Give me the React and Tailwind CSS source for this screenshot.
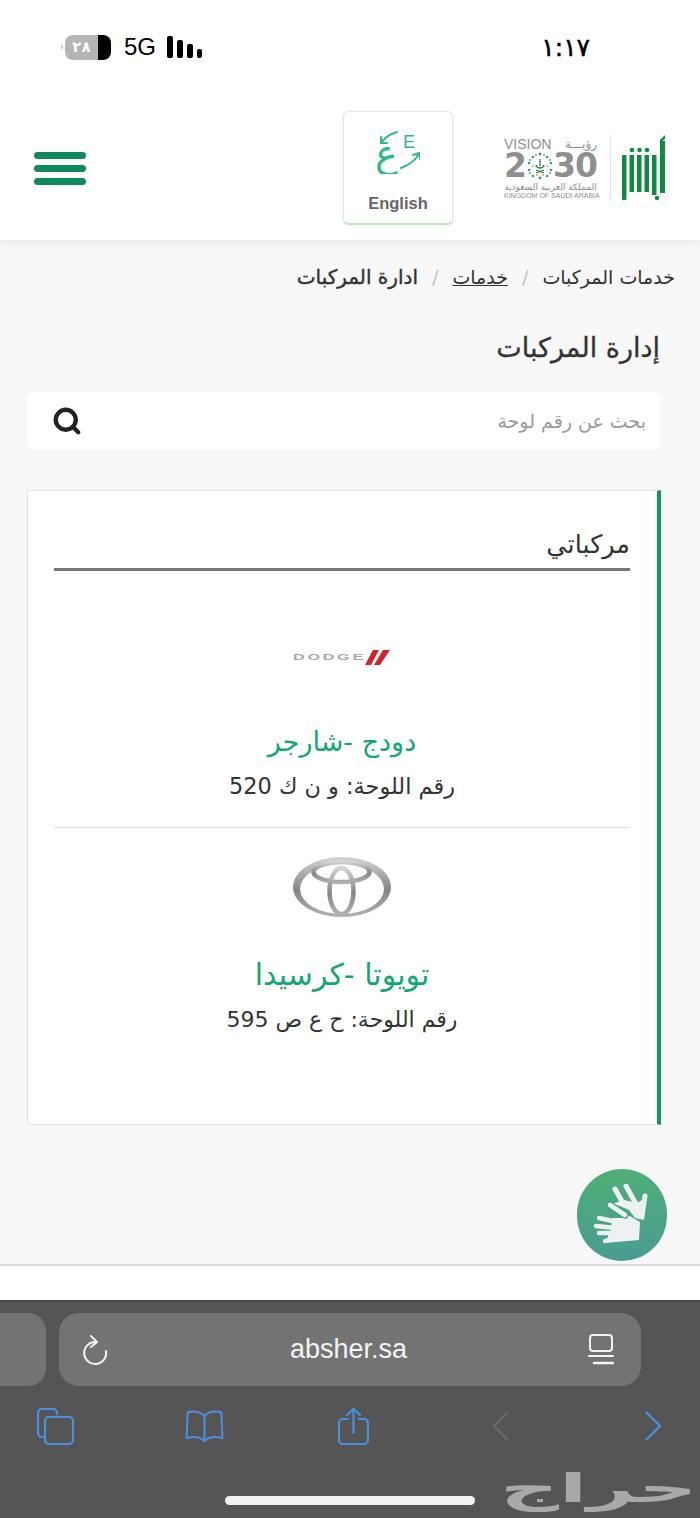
import React from 'react';
import { Search } from 'lucide-react';

const arabic = "font-['DejaVu_Sans',sans-serif]";

const StatusBar = () => (
  <div dir="ltr" className="flex items-center justify-between h-[98px] pl-[61px] pr-[110px] pb-[4px]">
    <div className="flex items-center">
      <div className="w-[2px] h-[6px] bg-gray-300 rounded-l mr-[2px]" />
      <div className="flex w-[46px] h-[25px] rounded-[8px] overflow-hidden bg-[#b5b5b5]">
        <div className="flex-1 text-center text-white text-[15px] leading-[25px] font-bold font-['DejaVu_Sans',sans-serif]">٢٨</div>
        <div className="w-[13px] bg-black" />
      </div>
      <span className="ml-[13px] text-[24px] leading-none text-black font-['Liberation_Sans',sans-serif]">5G</span>
      <div className="ml-[11px] flex items-end gap-[4px]">
        <div className="w-[6px] h-[22px] bg-black rounded-[2px]" />
        <div className="w-[6px] h-[18px] bg-black rounded-[2px]" />
        <div className="w-[6px] h-[14px] bg-black rounded-[2px]" />
        <div className="w-[5px] h-[9px] bg-black rounded-[2px]" />
      </div>
    </div>
    <span className="text-[25px] leading-none text-black [-webkit-text-stroke:0.5px_#000] font-['DejaVu_Sans',sans-serif]">١:١٧</span>
  </div>
);

const AbsherLogo = () => (
  <svg width="44" height="66" viewBox="0 0 44 66" fill="#128a45">
    <rect x="0" y="20" width="4.5" height="45" rx="1" />
    <rect x="7.5" y="20" width="4.5" height="37" />
    <rect x="15" y="20" width="4.5" height="37" />
    <rect x="22.5" y="20" width="4.5" height="37" />
    <rect x="30" y="20" width="4.5" height="40" />
    <rect x="38" y="6" width="5" height="52" />
    <circle cx="10" cy="15" r="2.3" />
    <circle cx="17.5" cy="15" r="2.3" />
    <circle cx="25" cy="15" r="2.3" />
    <circle cx="35" cy="63" r="2.3" />
    <path d="M38 5 L43 0 V4 L38 8 Z" />
  </svg>
);

const VisionLogo = () => (
  <div dir="ltr" className="w-[93px] text-[#8f8f8f] font-['Liberation_Sans',sans-serif]">
    <div className="flex items-center justify-between h-[14px] overflow-hidden">
      <span className="text-[14px] leading-[14px]">VISION</span>
      <span className="text-[12px] leading-[14px] font-['DejaVu_Sans',sans-serif]">رؤيـــة</span>
    </div>
    <div className="flex items-center justify-between h-[30px] text-[33px] leading-[30px] font-bold tracking-[-1px] font-['DejaVu_Sans',sans-serif]">
      <span>2</span>
      <svg width="26" height="28" viewBox="0 0 26 28" className="shrink-0">
        <g fill="#3f9a7a">
          <circle cx="13" cy="2" r="1.4" /><circle cx="6" cy="5" r="1.3" /><circle cx="20" cy="5" r="1.3" />
          <circle cx="2" cy="11" r="1.3" /><circle cx="24" cy="11" r="1.3" /><circle cx="2" cy="18" r="1.3" />
          <circle cx="24" cy="18" r="1.3" /><circle cx="6" cy="24" r="1.3" /><circle cx="20" cy="24" r="1.3" />
          <circle cx="13" cy="26" r="1.4" />
        </g>
        <g fill="#5aa6c8">
          <circle cx="9" cy="3" r="1" /><circle cx="17" cy="3" r="1" /><circle cx="3" cy="8" r="1" />
          <circle cx="23" cy="8" r="1" /><circle cx="3" cy="21" r="1" /><circle cx="23" cy="21" r="1" />
        </g>
        <g fill="#c9b458">
          <circle cx="6" cy="14" r="1" /><circle cx="20" cy="14" r="1" /><circle cx="10" cy="23" r="1" /><circle cx="16" cy="23" r="1" />
        </g>
        <path d="M13 7 V14 M9 13 C10 17 16 17 17 13 M9 18 L17 21 M17 18 L9 21" stroke="#2e7d4f" strokeWidth="1.3" fill="none" />
      </svg>
      <span>30</span>
    </div>
    <div dir="rtl" className="mt-px text-[9px] leading-[10px] text-center whitespace-nowrap font-['DejaVu_Sans',sans-serif]">المملكة العربية السعودية</div>
    <div className="text-[7px] leading-[8px] whitespace-nowrap">KINGDOM OF SAUDI ARABIA</div>
  </div>
);

const LangIcon = () => (
  <svg dir="ltr" width="44" height="43" viewBox="0 0 44 43" fill="none" stroke="#2fb98a" strokeWidth="2" strokeLinecap="round" strokeLinejoin="round">
    <path d="M21 1 C14 3 9 6 5 12" />
    <path d="M5 6 L5 12 L11 12" />
    <path d="M25 37 C33 34 40 30 43 22" />
    <path d="M37 24 L43 22 L44 28" />
    <text x="27" y="17" direction="ltr" fill="#2fb98a" stroke="none" fontSize="18" fontFamily="Liberation Sans, sans-serif">E</text>
    <text x="-1" y="36" direction="ltr" fill="#2fb98a" stroke="none" fontSize="38" fontFamily="DejaVu Sans, sans-serif">ع</text>
  </svg>
);

const DodgeLogo = () => (
  <div dir="ltr" className="flex items-center h-[16px] w-[98px]">
    <span className="text-[9px] leading-none font-bold tracking-[1.5px] text-[#a8a8a8] font-['Liberation_Sans',sans-serif] [transform:scaleX(1.8)] origin-left">DODGE</span>
    <svg width="26" height="15" viewBox="0 0 26 15" className="ml-auto" fill="#d2232a">
      <path d="M8 0 H14 L6 15 H0 Z" />
      <path d="M18 0 H25 L15 15 H9 Z" />
    </svg>
  </div>
);

const ToyotaLogo = () => (
  <svg width="98" height="60" viewBox="0 0 98 60" fill="none">
    <defs>
      <linearGradient id="chrome" x1="0" y1="0" x2="0" y2="1">
        <stop offset="0" stopColor="#d4d4d4" />
        <stop offset="0.55" stopColor="#858585" />
        <stop offset="1" stopColor="#b0b0b0" />
      </linearGradient>
    </defs>
    <path
      fillRule="evenodd"
      fill="url(#chrome)"
      d="M0 30 A49 30 0 1 0 98 30 A49 30 0 1 0 0 30 Z M7 32 A42 25 0 1 1 91 32 A42 25 0 1 1 7 32 Z"
    />
    <ellipse cx="48.5" cy="15" rx="28" ry="10" stroke="url(#chrome)" strokeWidth="4.5" />
    <ellipse cx="48.5" cy="34" rx="12" ry="23" stroke="url(#chrome)" strokeWidth="4.5" />
  </svg>
);

const HandsIcon = () => (
  <svg width="62" height="62" viewBox="0 0 62 62" fill="#eef1f3">
    <g stroke="#eef1f3" strokeWidth="5" strokeLinecap="round">
      <path d="M24 5 L33 21" />
      <path d="M35 2 L45 20" />
      <path d="M54 12 L51 32" />
    </g>
    <path d="M21 20 L33 16 L46 19 L51 16 L55 13 L53 36 L44 34 L38 26 L29 22 Z" />
    <g stroke="#eef1f3" strokeWidth="4.4" strokeLinecap="round">
      <path d="M8 34 L26 38" />
      <path d="M5 42 L24 44" />
      <path d="M8 49 L24 49" />
      <path d="M14 57 L24 54" />
    </g>
    <path d="M21 34 L33 34 L37 31 L49 38 L48 56 L14 59 L20 46 Z" />
    <path d="M19 21 L34 31" stroke="#4aa583" strokeWidth="7.5" strokeLinecap="round" />
    <path d="M19 21 L34 31" stroke="#eef1f3" strokeWidth="4.6" strokeLinecap="round" />
  </svg>
);

const Vehicle = ({ name, plate, logo, logoClass, nameClass, plateClass }) => (
  <div className="flex flex-col items-center">
    <div className={logoClass}>{logo}</div>
    <div className={`leading-[34px] text-[#13a772] ${arabic} ${nameClass}`}>{name}</div>
    <div className={`leading-[30px] text-[#333] ${arabic} ${plateClass}`}>{plate}</div>
  </div>
);

const Toolbar = () => (
  <div dir="ltr" className="relative h-[218px] bg-[#555555] border-t-[2px] border-[#454545]">
    <div className="flex gap-[13px] pt-[11px]">
      <div className="w-[46px] h-[73px] bg-[#737373] rounded-r-[18px]" />
      <div className="flex items-center justify-between w-[582px] h-[73px] pl-[22px] pr-[27px] bg-[#737373] rounded-[20px]">
        <svg width="28" height="32" viewBox="0 0 28 32" fill="none" stroke="#f4f4f4" strokeWidth="2" strokeLinecap="round" strokeLinejoin="round">
          <path d="M15 8 A11 11 0 1 0 25 17" />
          <path d="M10 2 L16 8 L10 13" />
        </svg>
        <span className="text-[27px] leading-none text-[#f4f4f4] font-['Liberation_Sans',sans-serif]">absher.sa</span>
        <svg width="26" height="34" viewBox="0 0 26 34" fill="none" stroke="#f4f4f4" strokeWidth="2" strokeLinecap="round">
          <rect x="2" y="2" width="22" height="16" rx="3" />
          <path d="M1 23 H25" />
          <path d="M6 30 H25" strokeWidth="2.4" />
        </svg>
      </div>
    </div>
    <div className="flex items-center pl-[37px] mt-[14px] h-[52px]">
      <svg width="37" height="37" viewBox="0 0 37 37" fill="none" stroke="#4a8fe0" strokeWidth="2.2">
        <path d="M7 29 H5 A4 4 0 0 1 1 25 V5 A4 4 0 0 1 5 1 H16 A4 4 0 0 1 20 5 V7" />
        <rect x="8" y="9" width="28" height="27" rx="4" />
      </svg>
      <svg width="39" height="32" viewBox="0 0 40 34" fill="none" stroke="#4a8fe0" strokeWidth="2.2" strokeLinejoin="round" className="ml-[111px]">
        <path d="M20 7 C17 2 11 1 4 2 C3 2 2 3 2 4 L1 30 C8 28 15 28 20 33 C25 28 32 28 39 30 L38 4 C38 3 37 2 36 2 C29 1 23 2 20 7 Z" />
        <path d="M20 7 V32" />
      </svg>
      <svg width="31" height="38" viewBox="0 0 31 38" fill="none" stroke="#4a8fe0" strokeWidth="2.2" strokeLinecap="round" className="ml-[114px]">
        <path d="M10 12 H5 A4 4 0 0 0 1 16 V33 A4 4 0 0 0 5 37 H26 A4 4 0 0 0 30 33 V16 A4 4 0 0 0 26 12 H21" />
        <path d="M15.5 26 V2" />
        <path d="M9 8 L15.5 2 L22 8" />
      </svg>
      <svg width="19" height="30" viewBox="0 0 19 30" fill="none" stroke="#6a6a6a" strokeWidth="2.4" className="ml-[122px]">
        <path d="M17 1 L3 15 L17 29" />
      </svg>
      <svg width="19" height="30" viewBox="0 0 19 30" fill="none" stroke="#4a8fe0" strokeWidth="2.4" className="ml-[134px]">
        <path d="M2 1 L16 15 L2 29" />
      </svg>
    </div>
    <div className="pl-[225px] mt-[44px]">
      <div className="w-[250px] h-[9px] bg-[#f2f2f2] rounded-full" />
    </div>
    <div dir="rtl" className="absolute left-[500px] top-[164px] text-[#a9a9a9] text-[40px] leading-[44px] font-bold font-['DejaVu_Sans',sans-serif] [transform:scaleX(2.05)] origin-left">حراج</div>
  </div>
);

export default function App() {
  return (
    <div dir="rtl" className="relative w-[700px] h-[1518px] overflow-hidden bg-[#f8f8f8]">
      <div className="bg-white h-[240px] shadow-[0_2px_12px_rgba(0,0,0,0.08)]">
        <StatusBar />
        <div className="flex items-center h-[142px] pr-[34px] pl-[34px] pb-[2px]">
          <AbsherLogo />
          <div className="w-px h-[66px] bg-[#e2e2e2] mr-[11px] ml-[13px]" />
          <VisionLogo />
          <div className="mr-[51px] w-[110px] h-[114px] rounded-[6px] bg-white border border-[#e4e4e4] border-b-2 border-b-[#bfe8bf] shadow-[0_1px_4px_rgba(0,0,0,0.08)] flex flex-col items-center pt-[19px]">
            <LangIcon />
            <span className="mt-[19px] text-[16.5px] leading-[20px] font-bold text-[#666] font-['Liberation_Sans',sans-serif]">English</span>
          </div>
          <div className="mr-auto w-[52px] flex flex-col gap-[6px]">
            <div className="h-[7px] rounded-full bg-[#0e8a5b]" />
            <div className="h-[7px] rounded-full bg-[#0e8a5b]" />
            <div className="h-[7px] rounded-full bg-[#0e8a5b]" />
          </div>
        </div>
      </div>

      <div className={`px-[25px] pt-[24px] flex items-center text-[19px] leading-[26px] text-[#333] ${arabic}`}>
        <span>خدمات المركبات</span>
        <span className="mx-[14px] text-[#c4c4c4]">/</span>
        <span className="underline">خدمات</span>
        <span className="mx-[14px] text-[#c4c4c4]">/</span>
        <span className="text-[20px] [-webkit-text-stroke:0.4px_#333]">ادارة المركبات</span>
      </div>

      <div className={`mt-[39px] px-[40px] text-[27px] leading-[38px] text-[#333] [-webkit-text-stroke:0.3px_#333] ${arabic}`}>إدارة المركبات</div>

      <div className="mr-[40px] mt-[25px] h-[58px] w-[633px] bg-white rounded-[8px] flex items-center justify-between pr-[14px] pl-[25px]">
        <span className={`text-[19px] text-[#9a9a9a] ${arabic}`}>بحث عن رقم لوحة</span>
        <Search size={30} strokeWidth={3.5} className="text-[#222]" />
      </div>

      <div className="mr-[39px] mt-[40px] w-[634px] h-[635px] bg-white border border-[#e3e3e3] border-r-[4px] border-r-[#0e9a5e] pr-[27px] pl-[26px] pt-[35px]">
        <div className={`h-[45px] border-b-[3px] border-[#777] text-[25.5px] leading-[36px] text-[#333] ${arabic}`}>مركباتي</div>
        <Vehicle
          name="دودج -شارجر"
          plate="رقم اللوحة: و ن ك 520"
          logo={<DodgeLogo />}
          logoClass="mt-[78px] h-[16px]"
          nameClass="mt-[60px] text-[27px]"
          plateClass="mt-[12px] text-[22.4px]"
        />
        <div className="mt-[26px] h-px bg-[#dedede]" />
        <Vehicle
          name="تويوتا -كرسيدا"
          plate="رقم اللوحة: ح ع ص 595"
          logo={<ToyotaLogo />}
          logoClass="mt-[29px] h-[60px]"
          nameClass="mt-[41px] text-[30px]"
          plateClass="mt-[13px] text-[22px]"
        />
      </div>

      <div className="absolute left-[577px] top-[1169px] w-[90px] h-[92px] rounded-full bg-gradient-to-b from-[#4fae76] to-[#4a9c92] flex items-center justify-center">
        <HandsIcon />
      </div>

      <div className="absolute left-0 right-0 top-[1264px] h-[36px] bg-white border-t-[2px] border-[#dcdcdc]" />
      <div className="absolute left-0 right-0 top-[1300px]">
        <Toolbar />
      </div>
    </div>
  );
}
